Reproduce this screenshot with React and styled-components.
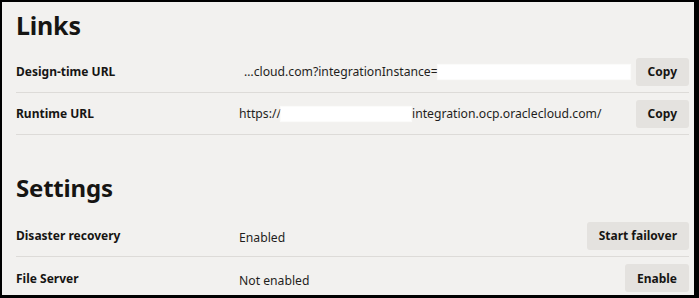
import React from "react";
import styled, { createGlobalStyle } from "styled-components";

const Global = createGlobalStyle`
  html, body { margin: 0; padding: 0; background: #000; }
  body { font-family: "Noto Sans", "Open Sans", sans-serif; color: #161513; }
`;

const Frame = styled.div`
  width: 699px;
  height: 298px;
  box-sizing: border-box;
  border-style: solid;
  border-color: #000;
  border-width: 2px 5px 3px 2px;
  background: #f2f1ef;
  overflow: hidden;
  padding: 0 5px 0 14px;
`;

const Heading = styled.h2`
  margin: 0;
  font-size: ${(p) => p.$size || 25}px;
  font-weight: 700;
  line-height: 30px;
  letter-spacing: -0.2px;
  padding-top: ${(p) => p.$top}px;
  padding-bottom: ${(p) => p.$bottom}px;
`;

const Row = styled.div`
  display: flex;
  align-items: center;
  height: 42px;
  box-sizing: border-box;
  border-bottom: ${(p) => (p.$last ? "none" : "1px solid #dddbd8")};
`;

const Label = styled.div`
  width: 223px;
  flex: none;
  font-size: 12px;
  font-weight: 700;
`;

const Value = styled.div`
  flex: 1;
  display: flex;
  align-items: center;
  font-size: 12.2px;
  white-space: nowrap;
  color: #1f1e1c;
  padding-top: ${(p) => p.$dy || 0}px;
`;

const Lead = styled.span`
  margin-left: 5px;
`;

const Redact = styled.span`
  display: inline-block;
  width: ${(p) => p.$w}px;
  height: 14px;
  background: #fff;
  box-shadow: 0 0 1px 1px rgba(255, 255, 255, 0.7);
  margin: 0 ${(p) => p.$mr || 0}px 0 ${(p) => p.$ml || 0}px;
`;

const Button = styled.button`
  flex: none;
  height: 28px;
  padding: 0 12px;
  border: none;
  border-radius: 3px;
  background: #e4e2df;
  font-family: inherit;
  font-size: 12px;
  font-weight: 700;
  color: #161513;
  cursor: pointer;
`;

export default function App() {
  return (
    <>
      <Global />
      <Frame>
        <Heading $top={8} $bottom={11}>Links</Heading>
        <Row>
          <Label>Design-time URL</Label>
          <Value>
            <Lead>…cloud.com?integrationInstance=</Lead>
            <Redact $w={192} />
          </Value>
          <Button>Copy</Button>
        </Row>
        <Row>
          <Label>Runtime URL</Label>
          <Value>
            https://
            <Redact $w={130} $mr={1} />
            integration.ocp.oraclecloud.com/
          </Value>
          <Button>Copy</Button>
        </Row>
        <Heading $top={38} $bottom={12} $size={24}>Settings</Heading>
        <Row>
          <Label>Disaster recovery</Label>
          <Value $dy={4}>Enabled</Value>
          <Button>Start failover</Button>
        </Row>
        <Row $last>
          <Label>File Server</Label>
          <Value $dy={4}>Not enabled</Value>
          <Button>Enable</Button>
        </Row>
      </Frame>
    </>
  );
}
